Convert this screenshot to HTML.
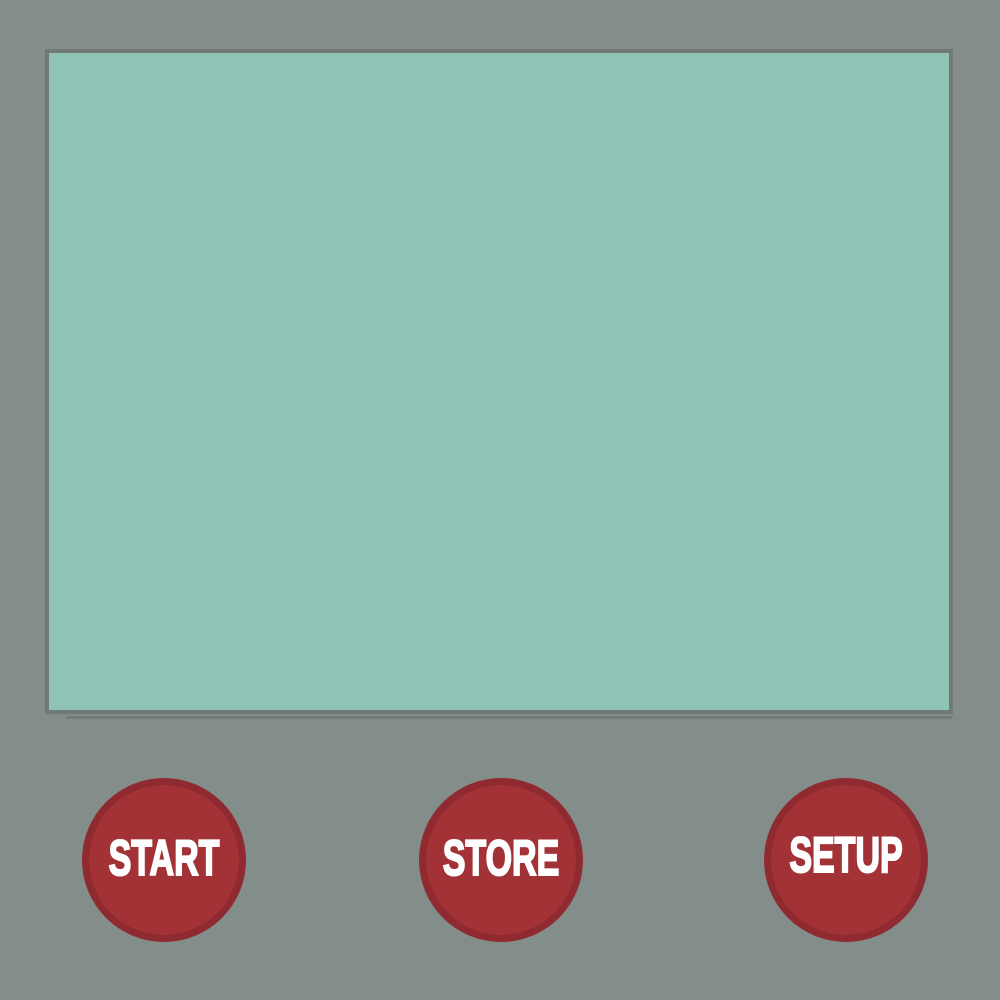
<!DOCTYPE html>
<html><head><style>
html,body{margin:0;padding:0;}
body{width:1000px;height:1000px;background:#838e8b;position:relative;overflow:hidden;font-family:"Liberation Sans",sans-serif;}
.frame{position:absolute;left:45px;top:49px;width:900px;height:657px;border:4px solid #707976;background:#8fc3b5;}
.line{position:absolute;left:66px;top:716px;width:886px;height:3px;background:#737c79;}
.btn{position:absolute;top:778px;width:164px;height:164px;border-radius:50%;background:#8f2a30;}
.btn .in{position:absolute;left:7px;top:7px;width:150px;height:150px;border-radius:50%;background:#a33236;}
.btn span{position:absolute;left:-20px;right:-20px;top:55px;text-align:center;color:#fff;font-weight:bold;font-size:50px;line-height:50px;transform:scaleX(0.68);-webkit-text-stroke:2px #fff;}
</style></head><body>
<div class="frame"></div>
<div class="line"></div>
<div class="btn" style="left:82px"><div class="in"></div><span>START</span></div>
<div class="btn" style="left:419px"><div class="in"></div><span>STORE</span></div>
<div class="btn" style="left:764px"><div class="in"></div><span style="top:52px">SETUP</span></div>
</body></html>
